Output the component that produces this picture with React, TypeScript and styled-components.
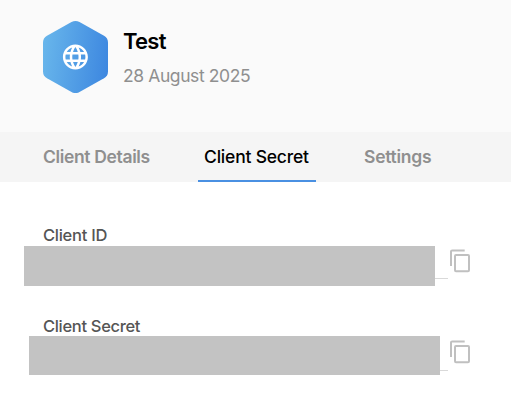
import React from 'react';
import styled, { createGlobalStyle } from 'styled-components';

const GlobalStyle = createGlobalStyle`
  * { box-sizing: border-box; }
  body {
    margin: 0;
    background: #fff;
    font-family: Inter, "Liberation Sans", sans-serif;
  }
`;

const Page = styled.main`
  width: 511px;
  height: 404px;
  overflow: hidden;
  background: #fff;
`;

const Header = styled.header`
  display: flex;
  align-items: flex-start;
  gap: 15px;
  height: 132px;
  padding: 21px 43px 0;
  background: #fafafa;
`;

const Heading = styled.div`
  padding-top: 6px;
`;

const Title = styled.h1`
  margin: 0;
  color: #000;
  font-size: 22px;
  font-weight: 600;
  line-height: 28px;
  letter-spacing: -0.75px;
`;

const DateText = styled.p`
  margin: 9px 0 0;
  color: #8f8f8f;
  font-size: 17.5px;
  line-height: 24px;
  letter-spacing: -0.4px;
  white-space: nowrap;
`;

const Tabs = styled.nav`
  display: flex;
  gap: 34px;
  height: 50px;
  padding-left: 36px;
  background: #f5f5f5;
`;

const Tab = styled.button<{ $active?: boolean; $width: number; $spacing: number }>`
  width: ${p => p.$width}px;
  height: 50px;
  padding: 2px 0 0 ${p => (p.$active ? 6 : 7)}px;
  border: 0;
  border-bottom: 2px solid ${p => (p.$active ? '#4a90e2' : 'transparent')};
  background: transparent;
  color: ${p => (p.$active ? '#000' : '#8f8f8f')};
  font: ${p => (p.$active ? 500 : 600)} 17.5px/24px Inter, "Liberation Sans", sans-serif;
  letter-spacing: ${p => p.$spacing}px;
  text-align: left;
  white-space: nowrap;

  &:last-child {
    margin-left: 7px;
  }
`;

const Fields = styled.section`
  display: flex;
  flex-direction: column;
  padding-top: 43px;
`;

const Field = styled.div`
  height: 91px;
`;

const Label = styled.div<{ $spacing: number }>`
  height: 21px;
  padding-left: 43px;
  color: #555;
  font-size: 16.5px;
  font-weight: 500;
  line-height: 21px;
  letter-spacing: ${p => p.$spacing}px;
`;

const ValueRow = styled.div<{ $indent: number; $top: number }>`
  display: flex;
  align-items: flex-start;
  padding-left: ${p => p.$indent}px;
  margin-top: ${p => p.$top}px;
`;

const HiddenValue = styled.div<{ $height: number }>`
  width: 411px;
  height: ${p => p.$height}px;
  background: #c3c3c3;
`;

const Underline = styled.div<{ $width: number; $height: number }>`
  width: ${p => p.$width}px;
  height: ${p => p.$height}px;
  border-bottom: 1px solid #d9d9d9;
`;

const CopyButton = styled.button<{ $top: number }>`
  display: flex;
  margin: ${p => p.$top}px 0 0 1px;
  padding: 0;
  border: 0;
  background: none;
`;

const HexBadge = () => (
  <svg width="65" height="72" viewBox="0 0 65 72" fill="none" aria-hidden="true">
    <defs>
      <linearGradient id="badge" x1="0" y1="32" x2="65" y2="40" gradientUnits="userSpaceOnUse">
        <stop stopColor="#67b5eb" />
        <stop offset="1" stopColor="#3e88e0" />
      </linearGradient>
    </defs>
    <path
      d="M28.5 1.1Q32.5-1 36.5 1.1L61 14.7Q65 17 65 21.5V50.5Q65 55 61 57.3L36.5 71Q32.5 73.2 28.5 71L4 57.3Q0 55 0 50.5V21.5Q0 17 4 14.7Z"
      fill="url(#badge)"
    />
    <path
      transform="translate(17.4 21) scale(1.25)"
      fill="#fff"
      d="M11.99 2C6.47 2 2 6.48 2 12s4.47 10 9.99 10C17.52 22 22 17.52 22 12S17.52 2 11.99 2zm6.93 6h-2.95c-.32-1.25-.78-2.45-1.38-3.56 1.84.63 3.37 1.91 4.33 3.56zM12 4.04c.83 1.2 1.48 2.53 1.91 3.96h-3.82c.43-1.43 1.08-2.76 1.91-3.96zM4.26 14C4.1 13.36 4 12.69 4 12s.1-1.36.26-2h3.38c-.08.66-.14 1.32-.14 2 0 .68.06 1.34.14 2H4.26zm.82 2h2.95c.32 1.25.78 2.45 1.38 3.56-1.84-.63-3.37-1.9-4.33-3.56zm2.95-8H5.08c.96-1.66 2.49-2.93 4.33-3.56C8.81 5.55 8.35 6.75 8.03 8zM12 19.96c-.83-1.2-1.48-2.53-1.91-3.96h3.82c-.43 1.43-1.08 2.76-1.91 3.96zM14.34 14H9.66c-.09-.66-.16-1.32-.16-2 0-.68.07-1.35.16-2h4.68c.09.65.16 1.32.16 2 0 .68-.07 1.34-.16 2zm.25 5.56c.6-1.11 1.06-2.31 1.38-3.56h2.95c-.96 1.65-2.49 2.93-4.33 3.56zM16.36 14c.08-.66.14-1.32.14-2 0-.68-.06-1.34-.14-2h3.38c.16.64.26 1.31.26 2s-.1 1.36-.26 2h-3.38z"
    />
  </svg>
);

const CopyIcon = () => (
  <svg width="22" height="25" viewBox="0 0 22 25" fill="none" stroke="#c0c0c0" strokeWidth="2" aria-hidden="true">
    <path d="M2 18V3.6Q2 2.4 3.2 2.4H15.7" />
    <rect x="6" y="7" width="14" height="16.3" rx="1" />
  </svg>
);

export default function App() {
  return (
    <>
      <GlobalStyle />
      <Page>
        <Header>
          <HexBadge />
          <Heading>
            <Title>Test</Title>
            <DateText>28 August 2025</DateText>
          </Heading>
        </Header>
        <Tabs>
          <Tab $width={128} $spacing={-0.35}>Client Details</Tab>
          <Tab $active $width={118} $spacing={-0.2}>Client Secret</Tab>
          <Tab $width={90} $spacing={-0.25}>Settings</Tab>
        </Tabs>
        <Fields>
          <Field>
            <Label $spacing={-0.27}>Client ID</Label>
            <ValueRow $indent={24} $top={0}>
              <HiddenValue $height={40} />
              <Underline $width={13} $height={33} />
              <CopyButton $top={2} aria-label="Copy client ID"><CopyIcon /></CopyButton>
            </ValueRow>
          </Field>
          <Field>
            <Label $spacing={-0.32}>Client Secret</Label>
            <ValueRow $indent={29} $top={-1}>
              <HiddenValue $height={39} />
              <Underline $width={8} $height={35} />
              <CopyButton $top={3} aria-label="Copy client secret"><CopyIcon /></CopyButton>
            </ValueRow>
          </Field>
        </Fields>
      </Page>
    </>
  );
}
